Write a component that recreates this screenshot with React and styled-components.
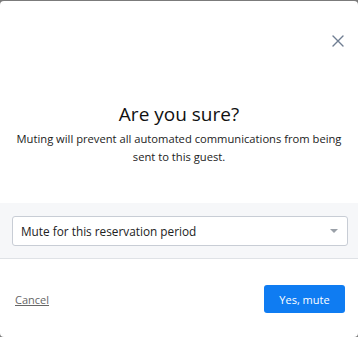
import React from 'react'
import styled, { createGlobalStyle } from 'styled-components'

const GlobalStyle = createGlobalStyle`
  html, body {
    margin: 0;
    padding: 0;
    background: #7b7b7b;
    font-family: "Open Sans", "Liberation Sans", sans-serif;
  }
`

const Modal = styled.div`
  margin-top: 1px;
  width: 358px;
  height: 336px;
  background: #fff;
  border-radius: 4px;
  display: flex;
  flex-direction: column;
  box-sizing: border-box;
`

const Header = styled.div`
  display: flex;
  justify-content: flex-end;
  padding: 33px 13px 0 0;
  height: 48px;
`

const CloseButton = styled.button`
  border: none;
  background: none;
  padding: 0;
  width: 14px;
  height: 14px;
  cursor: pointer;
  display: flex;
  align-items: center;
  justify-content: center;
`

const Body = styled.div`
  text-align: center;
  padding: 18px 14px 0;
  height: 121px;
  box-sizing: border-box;
`

const Title = styled.h2`
  margin: 0;
  font-size: 19px;
  line-height: 28px;
  font-weight: 400;
  color: #111;
`

const Message = styled.p`
  margin: 2px 0 0;
  font-size: 11.2px;
  line-height: 18px;
  color: #222;
`

const OptionBand = styled.div`
  background: #f6f7f9;
  border-bottom: 1px solid #dfe2e6;
  padding: 13px 10px 12px 12px;
`

const Select = styled.div`
  height: 30px;
  box-sizing: border-box;
  border: 1px solid #c8cdd5;
  border-radius: 3px;
  background: #fff;
  display: flex;
  align-items: center;
  justify-content: space-between;
  padding: 0 9px 0 8px;
  font-size: 11.8px;
  color: #222;
`

const Caret = styled.span`
  width: 0;
  height: 0;
  border-left: 4px solid transparent;
  border-right: 4px solid transparent;
  border-top: 4px solid #9aa0a8;
`

const Footer = styled.div`
  display: flex;
  align-items: center;
  justify-content: space-between;
  padding: 26px 13px 0 15px;
`

const CancelLink = styled.a`
  font-size: 11px;
  color: #666;
  text-decoration: underline;
  cursor: pointer;
`

const PrimaryButton = styled.button`
  border: none;
  border-radius: 3px;
  background: #0f7cf2;
  color: #fff;
  font-family: inherit;
  font-size: 11px;
  height: 28px;
  width: 81px;
  padding: 0;
  cursor: pointer;
`

export default function App() {
  return (
    <>
      <GlobalStyle />
      <Modal>
        <Header>
          <CloseButton aria-label="Close">
            <svg width="12" height="12" viewBox="0 0 12 12">
              <path d="M1 1L11 11M11 1L1 11" stroke="#6f7d92" strokeWidth="1.4" strokeLinecap="round" />
            </svg>
          </CloseButton>
        </Header>
        <Body>
          <Title>Are you sure?</Title>
          <Message>
            Muting will prevent all automated communications from being sent to this guest.
          </Message>
        </Body>
        <OptionBand>
          <Select>
            <span>Mute for this reservation period</span>
            <Caret />
          </Select>
        </OptionBand>
        <Footer>
          <CancelLink>Cancel</CancelLink>
          <PrimaryButton>Yes, mute</PrimaryButton>
        </Footer>
      </Modal>
    </>
  )
}
